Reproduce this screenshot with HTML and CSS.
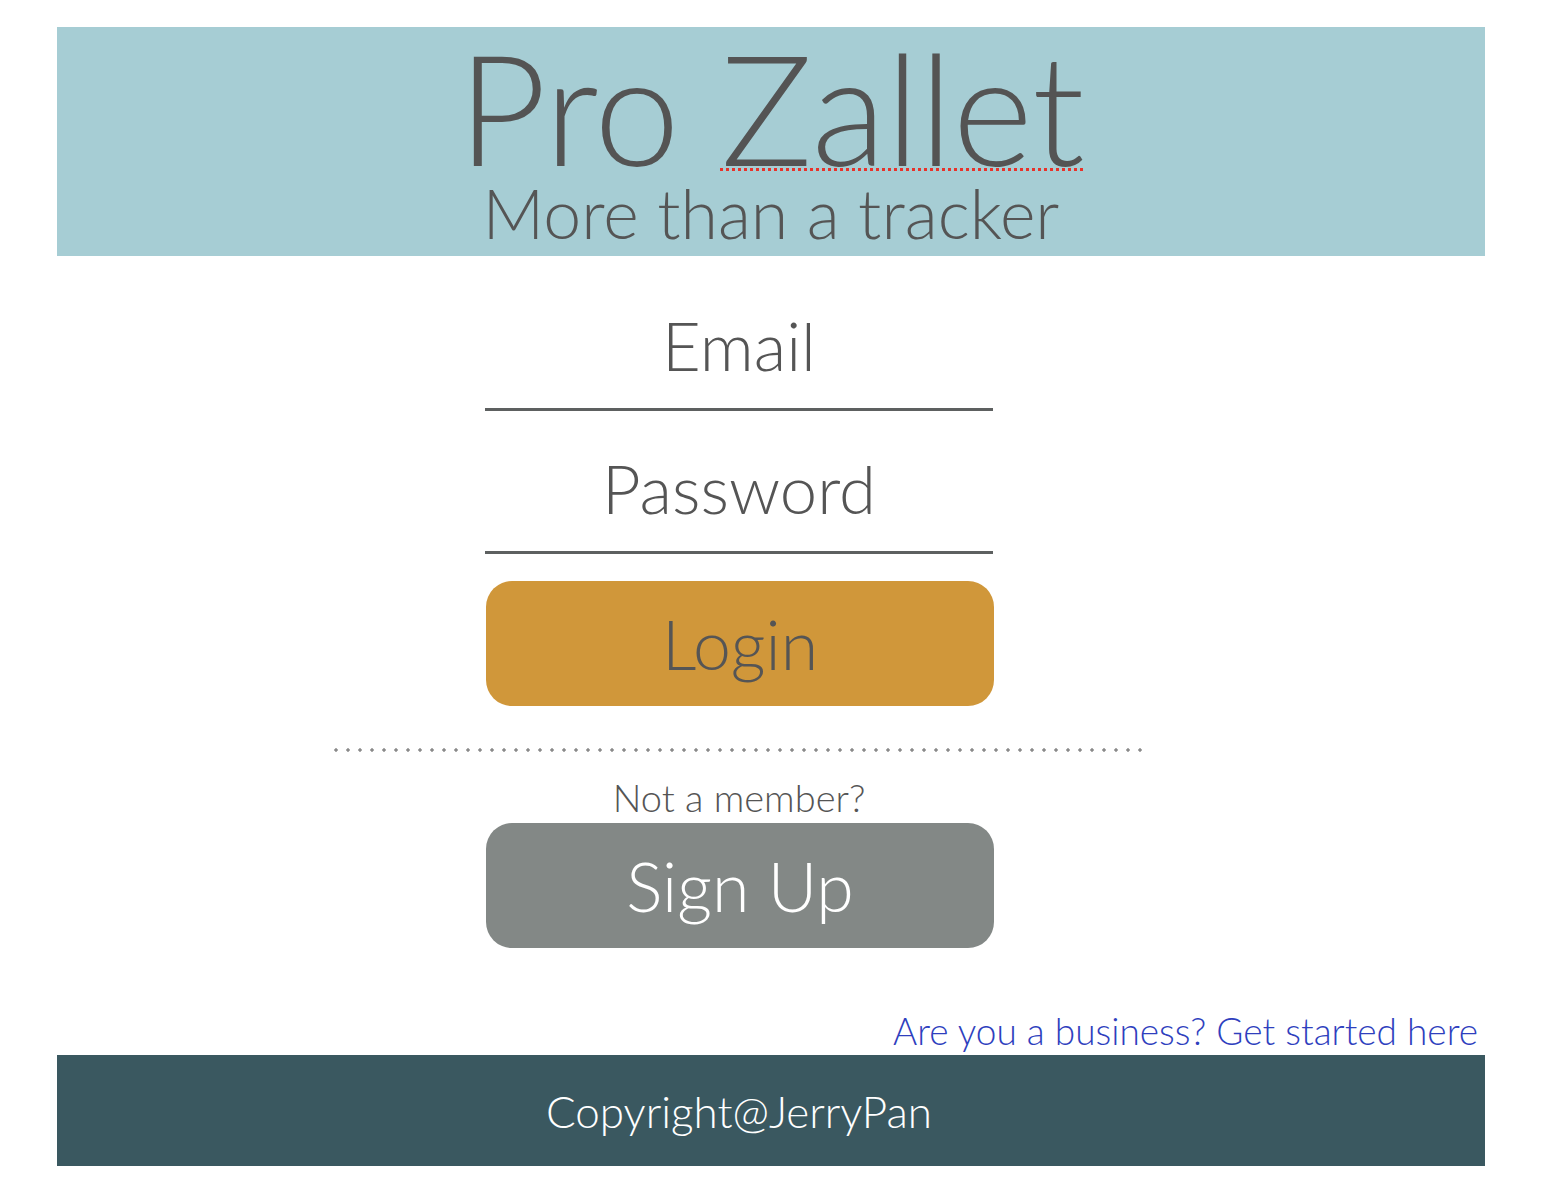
FILE: index.html
```html
<!DOCTYPE html>
<html lang="en">
<head>
<meta charset="utf-8">
<title>Pro Zallet</title>
<link rel="stylesheet" href="styles.css">
</head>
<body>
<div class="page">
  <header class="hero">
    <h1 class="title">Pro <span class="spell">Zallet</span></h1>
    <p class="subtitle">More than a tracker</p>
  </header>
  <main class="main">
    <div class="field">Email</div>
    <div class="field">Password</div>
    <button class="btn btn-login">Login</button>
    <div class="dots"></div>
    <p class="member">Not a member?</p>
    <button class="btn btn-signup">Sign Up</button>
  </main>
  <div class="biz"><a href="#" class="biz-link">Are you a business? Get started here</a></div>
  <footer class="footer">Copyright@JerryPan</footer>
</div>
</body>
</html>
```

FILE: styles.css
```css
html, body {
  margin: 0;
  padding: 0;
  background: #ffffff;
}
body {
  font-family: Lato, "Open Sans", sans-serif;
  font-weight: 300;
  color: #555555;
}
.page {
  margin: 27px 61px 0 57px;
}
.hero {
  background: #a6cdd4;
  height: 229px;
  display: flex;
  flex-direction: column;
  align-items: center;
  padding-top: 10px;
  box-sizing: border-box;
}
.title {
  margin: 0;
  font-size: 154px;
  font-weight: 300;
  line-height: 140px;
  color: #545454;
  letter-spacing: -0.5px;
}
.spell {
  text-decoration: underline dotted #e8322a;
  text-decoration-thickness: 3px;
  text-underline-offset: 2px;
}
.subtitle {
  margin: 2px 0 0;
  font-size: 68px;
  line-height: 68px;
  color: #555555;
}
.main {
  display: flex;
  flex-direction: column;
  align-items: center;
  padding-right: 64px;
}
.field {
  width: 508px;
  box-sizing: border-box;
  text-align: center;
  font-size: 67px;
  line-height: 1;
  padding-bottom: 29px;
  border-bottom: 3px solid #5d6060;
  margin-top: 56px;
}
.field + .field {
  margin-top: 44px;
}
.btn {
  width: 508px;
  height: 125px;
  margin-left: 2px;
  border: none;
  border-radius: 26px;
  font-family: inherit;
  font-weight: 300;
  font-size: 68px;
  line-height: 1;
  padding: 0;
  display: flex;
  align-items: center;
  justify-content: center;
}
.btn-login {
  margin-top: 27px;
  background: #d0973a;
  color: #555555;
}
.dots {
  width: 812px;
  height: 4px;
  margin-top: 42px;
  margin-right: 6px;
  background-image: radial-gradient(circle, #8a8a8a 1.4px, transparent 2px);
  background-size: 12px 4px;
}
.member {
  margin: 26px 0 0;
  font-size: 38px;
  line-height: 1;
}
.btn-signup {
  margin-top: 7px;
  background: #838886;
  color: #ffffff;
}
.biz {
  display: flex;
  justify-content: flex-end;
  padding-right: 7px;
  margin-top: 64px;
}
.biz-link {
  font-size: 37px;
  line-height: 1;
  color: #2f3fbe;
  text-decoration: none;
}
.footer {
  margin-top: 6px;
  background: #3a5860;
  height: 111px;
  display: flex;
  align-items: center;
  justify-content: center;
  padding-right: 64px;
  color: #ffffff;
  font-size: 44px;
}
```
